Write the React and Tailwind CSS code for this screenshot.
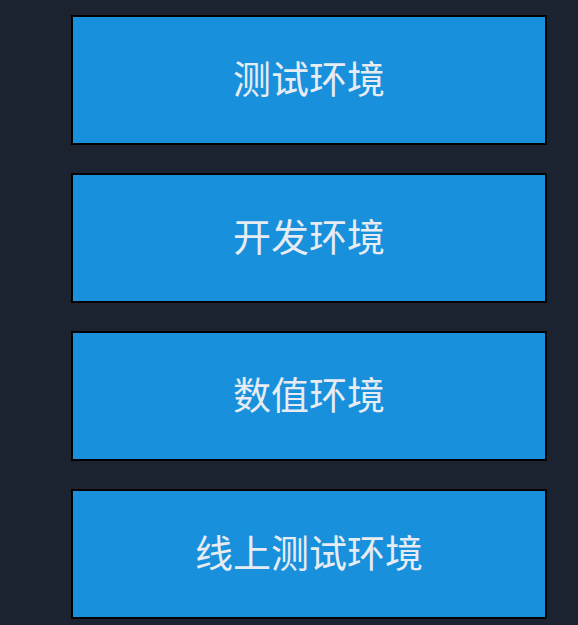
import React from 'react';

const envs = ['测试环境', '开发环境', '数值环境', '线上测试环境'];

const App = () => {
  return (
    <div className="min-h-screen w-full bg-[#1c2330] pt-[15px] pl-[71px] pr-[31px] flex flex-col gap-[28px]">
      {envs.map((name) => (
        <button
          key={name}
          className="w-[476px] h-[130px] bg-[#1890dc] border-2 border-black flex items-center justify-center pb-[8px] text-[38px] text-[#e6ecf2] font-['Noto_Sans_CJK_SC',sans-serif]"
        >
          {name}
        </button>
      ))}
    </div>
  );
};

export default App;
